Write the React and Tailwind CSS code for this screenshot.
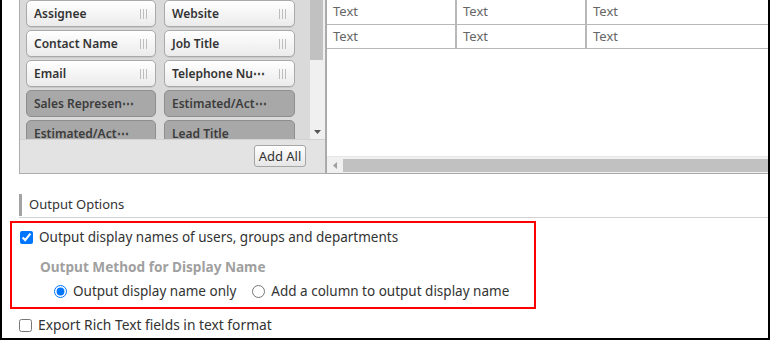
import React from "react";

function Grip() {
  return (
    <div className="flex gap-[2px] items-center h-[10px]">
      <span className="w-px h-[10px] bg-[#bdbdbd]" />
      <span className="w-px h-[10px] bg-[#bdbdbd]" />
      <span className="w-px h-[10px] bg-[#bdbdbd]" />
    </div>
  );
}

function Item({ label, dim }) {
  if (dim) {
    return (
      <div className="h-[27px] rounded-[5px] border border-[#8e8e8e] bg-[#a8a8a8] flex items-center pl-[7px] pr-[9px] text-[12px] font-semibold text-[#3c3c3c] leading-none whitespace-nowrap overflow-hidden">
        {label}
      </div>
    );
  }
  return (
    <div className="h-[27px] rounded-[5px] border border-[#a9a9a9] bg-gradient-to-b from-white to-[#ebebeb] flex items-center justify-between pl-[7px] pr-[8px] text-[12px] font-semibold text-[#333] leading-none whitespace-nowrap overflow-hidden shadow-[0_1px_0_rgba(0,0,0,0.08)]">
      <span>{label}</span>
      <Grip />
    </div>
  );
}

function Cell({ w, last }) {
  return (
    <div
      className={
        "h-full flex items-center pl-[6px] text-[13px] text-[#666] " +
        (last ? "flex-1" : "border-r-2 border-[#b8b8b8]")
      }
      style={w ? { width: w } : undefined}
    >
      Text
    </div>
  );
}

export default function App() {
  const items = [
    ["Assignee", false],
    ["Website", false],
    ["Contact Name", false],
    ["Job Title", false],
    ["Email", false],
    ["Telephone Nu⋯", false],
    ["Sales Represen⋯", true],
    ["Estimated/Act⋯", true],
    ["Estimated/Act⋯", true],
    ["Lead Title", true],
  ];
  return (
    <div className="w-[770px] h-[340px] border-x-2 border-b-2 border-black bg-white overflow-hidden font-['Noto_Sans',sans-serif] text-[#333]">
      {/* top row */}
      <div className="flex pl-[17px] h-[174px]">
        {/* field panel */}
        <div className="w-[307px] h-full flex flex-col border-l border-r border-b border-[#adadad] bg-[#dadada]">
          <div className="flex h-[139px]">
            <div className="w-[290px] h-full overflow-hidden pl-[6px] pr-[13px]">
              <div className="grid grid-cols-[130px_131px] gap-x-[8px] gap-y-[3px]">
                {items.map(([l, d], i) => (
                  <Item key={i} label={l} dim={d} />
                ))}
              </div>
            </div>
            <div className="w-[15px] h-full bg-[#f0f0f0] flex flex-col items-stretch">
              <div className="h-[60px] bg-[#c1c1c1] mr-[2px]" />
              <div className="flex-1" />
              <div className="h-[14px] flex items-center justify-center pr-[1px]">
                <svg width="7" height="4" viewBox="0 0 7 4">
                  <path d="M0 0H7L3.5 4Z" fill="#555" />
                </svg>
              </div>
            </div>
          </div>
          <div className="flex-1 bg-[#e3e3e3] border-t border-[#d2d2d2] flex justify-end items-start pt-[5px] pr-[19px]">
            <button className="h-[22px] w-[52px] rounded-[3px] border border-[#a6a6a6] bg-gradient-to-b from-white to-[#e6e6e6] text-[13px] text-[#333] leading-none">
              Add All
            </button>
          </div>
        </div>
        {/* table */}
        <div className="flex-1 h-full flex flex-col border-l border-b border-[#a8a8a8]">
          <div className="h-[25px] flex border-b border-[#b8b8b8]">
            <Cell w={130} />
            <Cell w={130} />
            <Cell last />
          </div>
          <div className="h-[24px] flex border-b border-[#b8b8b8]">
            <Cell w={130} />
            <Cell w={130} />
            <Cell last />
          </div>
          <div className="flex-1" />
          <div className="h-[17px] bg-[#f0f0f0] border-t border-[#e6e6e6] flex items-center">
            <div className="w-[16px] flex items-center justify-center">
              <svg width="4" height="7" viewBox="0 0 4 7">
                <path d="M4 0V7L0 3.5Z" fill="#a0a0a0" />
              </svg>
            </div>
            <div className="flex-1 h-[13px] bg-[#c1c1c1]" />
          </div>
        </div>
      </div>

      {/* Output options header */}
      <div className="mt-[20px] ml-[17px] h-[24px] flex border-b border-[#d3d3d3]">
        <div className="w-[3px] h-[22px] bg-[#a3a3a3]" />
        <div className="pl-[7px] h-[22px] flex items-center text-[13px] text-[#333]">
          Output Options
        </div>
      </div>

      {/* red box */}
      <div className="mt-[3px] ml-[8px] w-[526px] h-[88px] border-2 border-[#ff0000] pl-[8px] pt-[4px]">
        <div className="h-[20px] flex items-center gap-[6px]">
          <input type="checkbox" defaultChecked className="m-0 w-[13px] h-[13px] accent-[#0075ff]" />
          <span className="text-[13.5px] text-[#333]">
            Output display names of users, groups and departments
          </span>
        </div>
        <div className="mt-[10px] h-[20px] flex items-center pl-[20px] text-[13.6px] font-bold text-[#a0a0a0]">
          Output Method for Display Name
        </div>
        <div className="mt-[5px] h-[19px] flex items-center pl-[34px]">
          <input type="radio" name="m" defaultChecked className="m-0 w-[13px] h-[13px] accent-[#0075ff]" />
          <span className="ml-[6px] text-[13.5px] text-[#333]">Output display name only</span>
          <input type="radio" name="m" className="m-0 ml-[16px] w-[13px] h-[13px]" />
          <span className="ml-[6px] text-[13.5px] text-[#333]">Add a column to output display name</span>
        </div>
      </div>

      {/* export */}
      <div className="mt-[6px] ml-[17px] h-[20px] flex items-center gap-[6px]">
        <input type="checkbox" className="m-0 w-[13px] h-[13px]" />
        <span className="text-[13.8px] text-[#333]">Export Rich Text fields in text format</span>
      </div>
    </div>
  );
}
